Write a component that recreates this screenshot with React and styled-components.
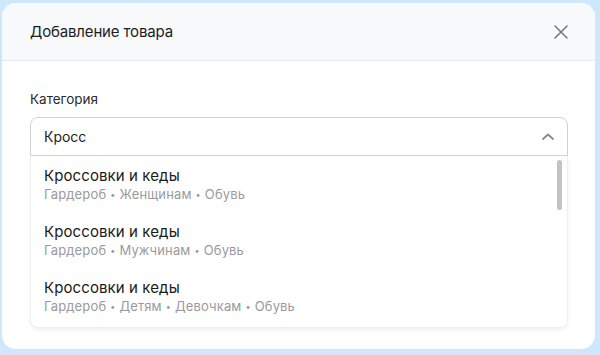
import React from 'react'
import styled, { createGlobalStyle } from 'styled-components'

const GlobalStyle = createGlobalStyle`
  html, body {
    margin: 0;
    padding: 0;
    background: #cfe7fa;
  }
  body {
    font-family: Inter, 'Noto Sans', sans-serif;
    -webkit-font-smoothing: antialiased;
  }
`

const Page = styled.div`
  width: 600px;
  height: 355px;
  padding: 3px 5px 6px 2px;
  box-sizing: border-box;
`

const Modal = styled.div`
  height: 100%;
  background: #fff;
  border-radius: 14px;
  overflow: hidden;
  display: flex;
  flex-direction: column;
`

const Header = styled.header`
  height: 58px;
  flex: none;
  display: flex;
  align-items: center;
  justify-content: space-between;
  padding: 0 26px 0 28px;
  background: #f8f9fb;
  border-bottom: 1px solid #e4e6ea;
  box-sizing: border-box;
`

const Title = styled.h2`
  margin: 0;
  font-size: 15px;
  font-weight: 400;
  color: #1d1d1f;
  letter-spacing: -0.15px;
`

const CloseButton = styled.button`
  border: none;
  background: none;
  padding: 0;
  width: 16px;
  height: 16px;
  display: flex;
  cursor: pointer;
`

const Body = styled.div`
  padding: 30px 27px 0 28px;
`

const Label = styled.div`
  font-size: 13.5px;
  color: #2b2b2b;
  margin-bottom: 10px;
`

const Combo = styled.div`
  position: relative;
`

const Field = styled.div`
  height: 39px;
  display: flex;
  align-items: center;
  justify-content: space-between;
  padding: 0 12px 0 13px;
  border: 1px solid #cfd1d5;
  border-radius: 8px 8px 0 0;
  box-sizing: border-box;
  font-size: 14px;
  color: #1d1d1f;
`

const List = styled.div`
  position: relative;
  height: 172px;
  border: 1px solid #eceef0;
  border-top: none;
  border-radius: 0 0 8px 8px;
  box-shadow: 0 2px 4px rgba(0, 0, 0, 0.06);
  padding-top: 10px;
  box-sizing: border-box;
`

const Item = styled.div`
  padding: 0 13px;
  height: 56px;
`

const ItemTitle = styled.div`
  font-size: 15px;
  line-height: 20px;
  color: #1a1a1a;
  letter-spacing: 0.1px;
`

const ItemPath = styled.div`
  font-size: 13px;
  line-height: 17px;
  color: #9a9a9e;
  letter-spacing: 0.15px;
`

const Dot = styled.span`
  font-size: 9px;
  vertical-align: 1px;
  margin: 0 4px;
`

const Scrollbar = styled.div`
  position: absolute;
  right: 5px;
  top: 4px;
  width: 5px;
  height: 50px;
  border-radius: 3px;
  background: #c2c3c6;
`

const items = [
  ['Гардероб', 'Женщинам', 'Обувь'],
  ['Гардероб', 'Мужчинам', 'Обувь'],
  ['Гардероб', 'Детям', 'Девочкам', 'Обувь'],
]

const App = () => {
  return (
    <Page>
      <GlobalStyle />
      <Modal>
        <Header>
          <Title>Добавление товара</Title>
          <CloseButton>
            <svg width='16' height='16' viewBox='0 0 16 16'>
              <path d='M2 2L14 14M14 2L2 14' stroke='#7a7a7e' strokeWidth='1.6' strokeLinecap='round' />
            </svg>
          </CloseButton>
        </Header>
        <Body>
          <Label>Категория</Label>
          <Combo>
            <Field>
              <span>Кросс</span>
              <svg width='14' height='9' viewBox='0 0 14 9'>
                <path d='M2 7L7 2.5L12 7' fill='none' stroke='#8a8a8e' strokeWidth='1.8' strokeLinecap='round' strokeLinejoin='round' />
              </svg>
            </Field>
            <List>
              {items.map((path, i) => (
                <Item key={i}>
                  <ItemTitle>Кроссовки и кеды</ItemTitle>
                  <ItemPath>
                    {path.map((p, j) => (
                      <React.Fragment key={j}>
                        {j > 0 && <Dot>•</Dot>}
                        {p}
                      </React.Fragment>
                    ))}
                  </ItemPath>
                </Item>
              ))}
              <Scrollbar />
            </List>
          </Combo>
        </Body>
      </Modal>
    </Page>
  )
}

export default App
